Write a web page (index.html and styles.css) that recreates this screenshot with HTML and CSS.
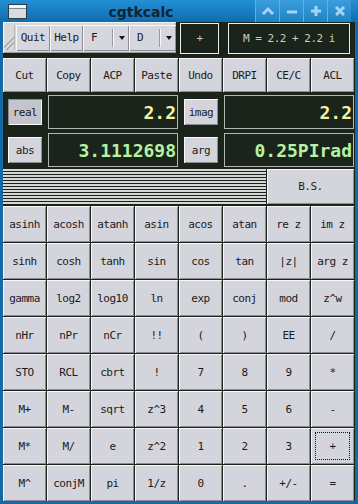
FILE: index.html
```html
<!DOCTYPE html>
<html lang="en">
<head>
  <meta charset="UTF-8" />
  <title>cgtkcalc</title>
  <link rel="stylesheet" href="styles.css">
</head>
<body>
  <div class="window">
    <div class="titlebar">
      <span class="win-icon"></span>
      <span class="title">cgtkcalc</span>
      <div class="win-buttons">
        <span class="wbtn"><svg width="14" height="14" viewBox="0 0 14 14"><path d="M2 10 L7 5 L12 10" fill="none" stroke="#a6d4f2" stroke-width="3"/></svg></span>
        <span class="wbtn"><svg width="14" height="14" viewBox="0 0 14 14"><path d="M2 8 H12" stroke="#a6d4f2" stroke-width="3"/></svg></span>
        <span class="wbtn"><svg width="14" height="14" viewBox="0 0 14 14"><path d="M2 7 H12 M7 2 V12" stroke="#a6d4f2" stroke-width="3"/></svg></span>
        <span class="wbtn"><svg width="14" height="14" viewBox="0 0 14 14"><path d="M3 3 L11 11 M11 3 L3 11" stroke="#a6d4f2" stroke-width="3"/></svg></span>
      </div>
    </div>

    <div class="content">
      <div class="toprow">
        <div class="toolbar">
          <span class="grip"></span>
          <button class="tbtn quit">Quit</button>
          <button class="tbtn help">Help</button>
          <div class="combo combo-f"><span class="combo-text">F</span><span class="sep"></span><span class="arrow"></span></div>
          <div class="combo combo-d"><span class="combo-text">D</span><span class="sep"></span><span class="arrow"></span></div>
        </div>
        <div class="box op-box">+</div>
        <div class="box mem-box">M = 2.2 + 2.2 i</div>
      </div>

      <div class="keys edit-row">
        <button class="key">Cut</button>
        <button class="key">Copy</button>
        <button class="key">ACP</button>
        <button class="key">Paste</button>
        <button class="key">Undo</button>
        <button class="key">DRPI</button>
        <button class="key">CE/C</button>
        <button class="key">ACL</button>
      </div>

      <div class="readouts first">
        <div class="readout">
          <button class="tag pressed">real</button>
          <div class="display yellow">2.2</div>
        </div>
        <div class="readout">
          <button class="tag">imag</button>
          <div class="display yellow">2.2</div>
        </div>
      </div>

      <div class="readouts second">
        <div class="readout">
          <button class="tag">abs</button>
          <div class="display green">3.1112698</div>
        </div>
        <div class="readout">
          <button class="tag">arg</button>
          <div class="display green">0.25PIrad</div>
        </div>
      </div>

      <div class="keys bs-row">
        <div class="hatch"></div>
        <button class="key bs">B.S.</button>
      </div>

      <div class="keys pad">
        <button class="key">asinh</button>
        <button class="key">acosh</button>
        <button class="key">atanh</button>
        <button class="key">asin</button>
        <button class="key">acos</button>
        <button class="key">atan</button>
        <button class="key">re z</button>
        <button class="key">im z</button>

        <button class="key">sinh</button>
        <button class="key">cosh</button>
        <button class="key">tanh</button>
        <button class="key">sin</button>
        <button class="key">cos</button>
        <button class="key">tan</button>
        <button class="key">|z|</button>
        <button class="key">arg z</button>

        <button class="key">gamma</button>
        <button class="key">log2</button>
        <button class="key">log10</button>
        <button class="key">ln</button>
        <button class="key">exp</button>
        <button class="key">conj</button>
        <button class="key">mod</button>
        <button class="key">z^w</button>

        <button class="key">nHr</button>
        <button class="key">nPr</button>
        <button class="key">nCr</button>
        <button class="key">!!</button>
        <button class="key">(</button>
        <button class="key">)</button>
        <button class="key">EE</button>
        <button class="key">/</button>

        <button class="key">STO</button>
        <button class="key">RCL</button>
        <button class="key">cbrt</button>
        <button class="key">!</button>
        <button class="key">7</button>
        <button class="key">8</button>
        <button class="key">9</button>
        <button class="key">*</button>

        <button class="key">M+</button>
        <button class="key">M-</button>
        <button class="key">sqrt</button>
        <button class="key">z^3</button>
        <button class="key">4</button>
        <button class="key">5</button>
        <button class="key">6</button>
        <button class="key">-</button>

        <button class="key">M*</button>
        <button class="key">M/</button>
        <button class="key">e</button>
        <button class="key">z^2</button>
        <button class="key">1</button>
        <button class="key">2</button>
        <button class="key">3</button>
        <button class="key focused"><span class="focus-ring">+</span></button>

        <button class="key">M^</button>
        <button class="key">conjM</button>
        <button class="key">pi</button>
        <button class="key">1/z</button>
        <button class="key">0</button>
        <button class="key">.</button>
        <button class="key">+/-</button>
        <button class="key">=</button>
      </div>
    </div>
  </div>
</body>
</html>
```

FILE: styles.css
```css
body {
  margin: 0;
  background: #0f5f98;
  font-family: "DejaVu Sans Mono", monospace;
}

.window {
  width: 358px;
  height: 504px;
  background: #1569a6;
  display: flex;
  flex-direction: column;
}

/* title bar */
.titlebar {
  height: 22px;
  display: flex;
  align-items: center;
  background: linear-gradient(#2390d4, #0f6cae);
}

.win-icon {
  width: 17px;
  height: 13px;
  margin-left: 8px;
  border: 1px solid #2c3c4c;
  background: linear-gradient(#f4f4f4 0 3px, #7a8a9a 3px 4px, #dcdcdc 4px);
}

.title {
  flex: 1;
  text-align: center;
  font-family: "DejaVu Sans", sans-serif;
  font-weight: bold;
  font-size: 14px;
  color: #102438;
  padding-top: 1px;
}

.win-buttons {
  display: flex;
  height: 22px;
  margin-right: 7px;
}

.wbtn {
  width: 23px;
  height: 22px;
  display: flex;
  align-items: center;
  justify-content: center;
  background: linear-gradient(#3a9ede, #1e82c4);
  border-left: 1px solid #5cb0e6;
}

/* main area */
.content {
  flex: 1;
  margin: 0 3px 3px 3px;
  background: #1b241b;
  display: flex;
  flex-direction: column;
}

button {
  font-family: "DejaVu Sans Mono", monospace;
  font-size: 11px;
  letter-spacing: -0.5px;
  color: #1a1a1a;
  padding: 0;
  border: none;
}

.toprow {
  height: 34px;
  display: flex;
}

.toolbar {
  width: 173px;
  height: 31px;
  display: flex;
  align-items: center;
  background: #d8d8d8;
  box-shadow: inset 1px 1px #f4f4f4, inset -1px -1px #9a9a9a;
  box-sizing: border-box;
}

.grip {
  width: 10px;
  height: 25px;
  margin-left: 1px;
  margin-right: 1px;
  background:
    linear-gradient(135deg, transparent 0 60%, #a8a8a8 60% 66%, transparent 66% 76%, #a8a8a8 76% 82%, transparent 82%);
  border-right: 1px solid #b8b8b8;
}

.tbtn,
.combo {
  height: 26px;
  background: #d6d6de;
  box-shadow: inset 1px 1px #f8f8f8, inset -1px -1px #8e8e96;
}

.quit { width: 34px; }
.help { width: 33px; }

.combo {
  display: flex;
  align-items: center;
  font-size: 11px;
  color: #1a1a1a;
}

.combo-f { width: 46px; }
.combo-d { width: 47px; }

.combo-text {
  width: 21px;
  padding-left: 8px;
}

.combo-d .combo-text {
  width: 22px;
}

.sep {
  width: 1px;
  height: 18px;
  background: #9a9aa2;
  border-right: 1px solid #f8f8f8;
}

.arrow {
  margin-left: 5px;
  width: 0;
  height: 0;
  border-left: 3.5px solid transparent;
  border-right: 3.5px solid transparent;
  border-top: 4px solid #111;
}

.box {
  height: 31px;
  margin-top: 1px;
  box-sizing: border-box;
  border: 1px solid #ececec;
  background: #1b241b;
  color: #c8ccc0;
  font-size: 11px;
  letter-spacing: -0.5px;
  display: flex;
  align-items: center;
  justify-content: center;
  white-space: pre;
}

.op-box {
  width: 39px;
  margin-left: 4px;
}

.mem-box {
  width: 122px;
  margin-left: 9px;
}

/* key grids */
.keys {
  display: grid;
  grid-template-columns: repeat(8, 43px);
  column-gap: 1px;
  row-gap: 1px;
}

.key {
  background: #d4d4dc;
  box-shadow: inset 1px 1px #f8f8f8, inset -1px -1px #8c8c94;
}

.edit-row {
  margin-top: 2px;
  grid-template-rows: 34px;
}

.readouts {
  display: flex;
  height: 34px;
}

.readouts.first { margin-top: 3px; }
.readouts.second { margin-top: 4px; }

.readout {
  width: 176px;
  display: flex;
  align-items: center;
}

.tag {
  width: 34px;
  height: 26px;
  margin-left: 5px;
  background: #d4d4dc;
  box-shadow: inset 1px 1px #f8f8f8, inset -1px -1px #8c8c94;
}

.tag.pressed {
  background: #c4c4cc;
  box-shadow: inset 1px 1px #8c8c94, inset -1px -1px #f8f8f8;
}

.display {
  flex: 1;
  height: 34px;
  margin-left: 6px;
  margin-right: 1px;
  box-sizing: border-box;
  border: 1px solid #b4b4b4;
  background: #1b241b;
  display: flex;
  align-items: center;
  justify-content: flex-end;
  padding-right: 1px;
  font-weight: bold;
  font-size: 18px;
}

.yellow { color: #f6f0a2; }
.green { color: #b4f2a4; }

.bs-row {
  margin-top: 2px;
  grid-template-rows: 35px;
}

.hatch {
  grid-column: span 6;
  background: repeating-linear-gradient(#d6d6d6 0 2px, #1b241b 2px 3px);
}

.bs {
  grid-column: span 2;
}

.pad {
  margin-top: 2px;
  grid-template-rows: repeat(8, 36px);
}

.focused {
  padding: 4px;
}

.focus-ring {
  display: flex;
  align-items: center;
  justify-content: center;
  height: 100%;
  box-sizing: border-box;
  border: 1px dotted #111;
}
```
